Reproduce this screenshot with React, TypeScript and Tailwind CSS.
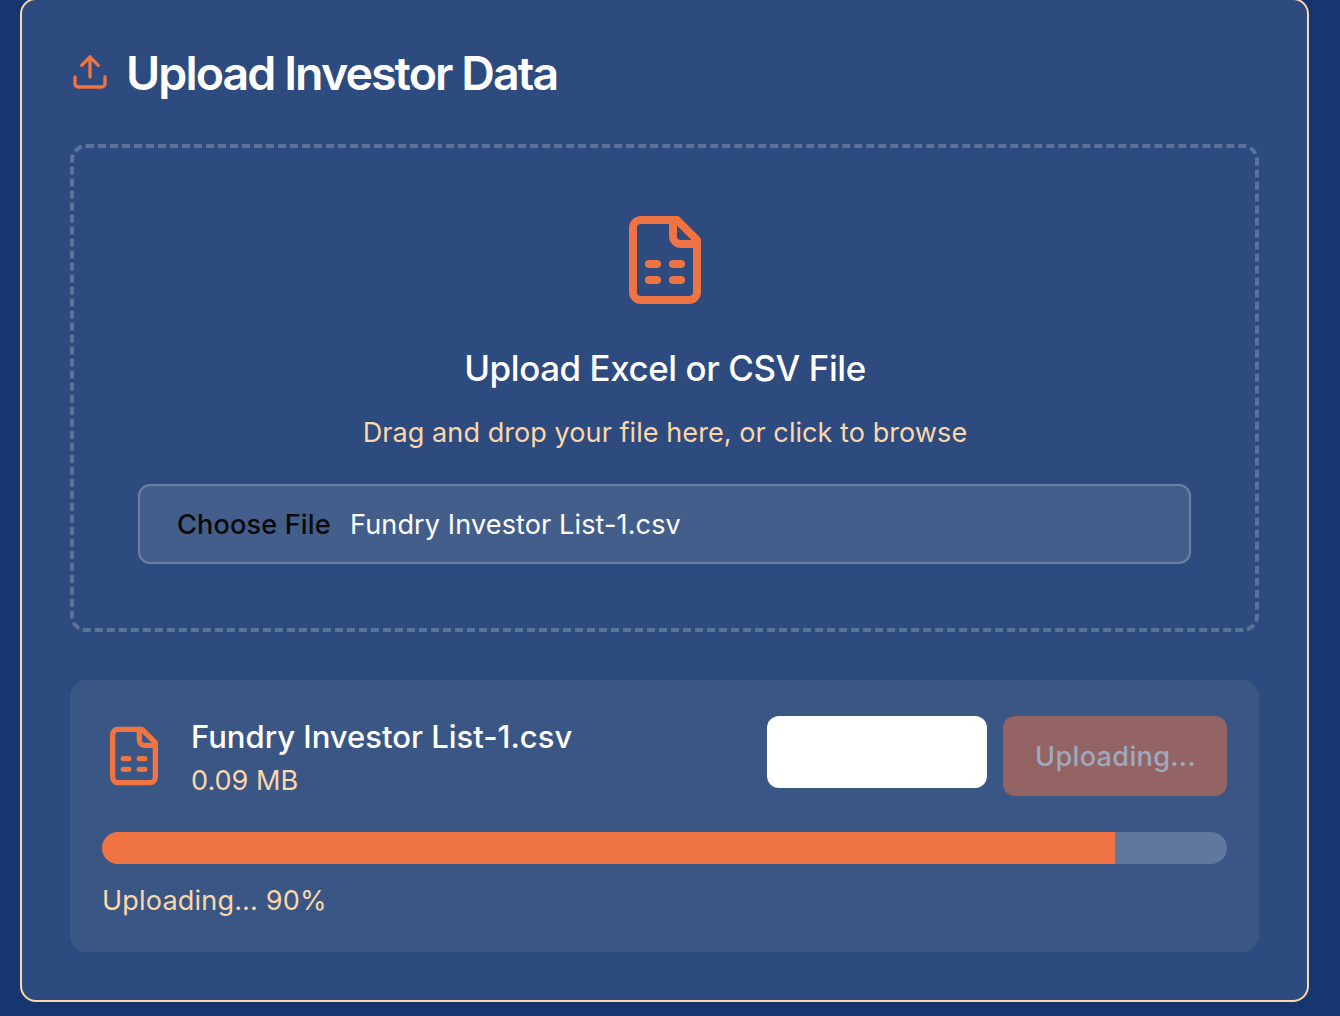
import React from "react";

function UploadIcon() {
  return (
    <svg
      className="size-10 shrink-0 text-[#f07343]"
      viewBox="0 0 24 24"
      fill="none"
      stroke="currentColor"
      strokeWidth="2"
      strokeLinecap="round"
      strokeLinejoin="round"
    >
      <path d="M21 15v4a2 2 0 0 1-2 2H5a2 2 0 0 1-2-2v-4" />
      <path d="m17 8-5-5-5 5" />
      <path d="M12 3v12" />
    </svg>
  );
}

function SpreadsheetIcon({ className }: { className: string }) {
  return (
    <svg
      className={className}
      viewBox="0 0 24 24"
      fill="none"
      stroke="currentColor"
      strokeWidth="2"
      strokeLinecap="round"
      strokeLinejoin="round"
    >
      <path d="M15 2H6a2 2 0 0 0-2 2v16a2 2 0 0 0 2 2h12a2 2 0 0 0 2-2V7Z" />
      <path d="M14 2v4a2 2 0 0 0 2 2h4" />
      <path d="M8 13h2" />
      <path d="M14 13h2" />
      <path d="M8 17h2" />
      <path d="M14 17h2" />
    </svg>
  );
}

function DropZone({ fileName }: { fileName: string }) {
  return (
    <section className="mt-12 flex flex-col items-center rounded-2xl border-4 border-dashed border-[#5b7299] p-16">
      <SpreadsheetIcon className="size-24 text-[#f07343]" />
      <h3 className="mt-8 pl-px text-[34.9px] leading-[56px] font-medium tracking-[-0.41px] text-white">
        Upload Excel or CSV File
      </h3>
      <p className="mt-4 h-10 pt-px pl-px text-[27.1px] leading-10 tracking-[0.03px] text-[#fbd7a9]">
        Drag and drop your file here, or click to browse
      </p>
      <label className="mt-8 flex h-20 w-full items-center rounded-xl border-2 border-[#6b80a4] bg-[#435e8a] pt-0.5 pl-9 text-[27.1px] leading-10">
        <span className="w-[174px] pl-px font-[470] tracking-[0.15px] text-[#0a0a0a]">Choose File</span>
        <span className="tracking-[0.1px] text-white">{fileName}</span>
      </label>
    </section>
  );
}

function UploadProgress({ fileName, size, percent }: { fileName: string; size: string; percent: number }) {
  return (
    <section className="mt-12 rounded-2xl bg-[#3a5684] p-8">
      <div className="flex items-center justify-between">
        <div className="flex items-center gap-6">
          <SpreadsheetIcon className="size-16 text-[#f07343]" />
          <div className="pl-px">
            <p className="h-12 pt-px text-[31px] leading-[48px] font-[470] text-white">{fileName}</p>
            <p className="h-10 pt-px text-[27.1px] leading-10 text-[#fbd7a9]">{size}</p>
          </div>
        </div>
        <div className="flex items-start gap-4">
          <button aria-label="Cancel" className="h-[72px] w-[220px] rounded-xl bg-white" />
          <button
            disabled
            className="h-20 w-56 rounded-xl bg-[#946464] pt-0.5 pl-px text-[27.1px] leading-10 font-[470] tracking-[0.33px] text-[#9caac1]"
          >
            Uploading...
          </button>
        </div>
      </div>
      <div className="mt-8 h-8 overflow-hidden rounded-full bg-[#60789e]">
        <div className="h-full bg-[#f07343]" style={{ width: `${percent}%` }} />
      </div>
      <p className="mt-4 h-10 pt-px text-[27.1px] leading-10 tracking-[0.15px] text-[#fbd7a9]">
        Uploading... {percent}%
      </p>
    </section>
  );
}

export default function App() {
  const fileName = "Fundry Investor List-1.csv";
  return (
    <div className="flex h-[1016px] w-[1340px] items-start overflow-hidden bg-[#17366f] pl-5 font-['Inter',sans-serif]">
      <main className="-mt-0.5 w-[1289px] rounded-2xl border-2 border-[#fbd7a9] bg-[#2d4b7f] p-12">
        <header className="flex h-12 items-center gap-4">
          <UploadIcon />
          <h2 className="pt-0.5 text-[46.5px] leading-[48px] font-semibold tracking-[-1.92px] text-white">
            Upload Investor Data
          </h2>
        </header>
        <DropZone fileName={fileName} />
        <UploadProgress fileName={fileName} size="0.09 MB" percent={90} />
      </main>
    </div>
  );
}
